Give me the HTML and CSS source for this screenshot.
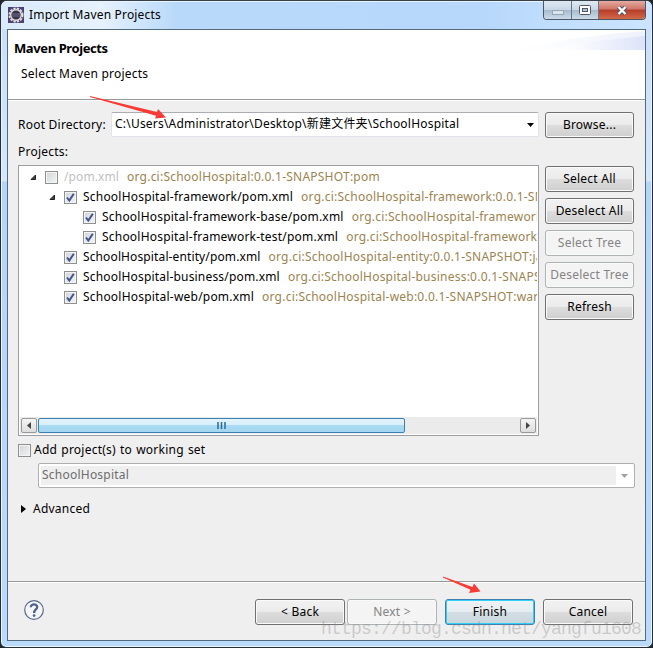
FILE: index.html
```html
<!DOCTYPE html>
<html lang="en">
<head>
<meta charset="utf-8">
<title>Import Maven Projects</title>
<link rel="stylesheet" href="styles.css">
</head>
<body>
<svg class="defs" width="0" height="0">
  <symbol id="tick" viewBox="0 0 13 13"><path d="M3 6.5 5.3 9.5 9.8 2.8" fill="none" stroke="#41558f" stroke-width="2"/></symbol>
  <symbol id="open" viewBox="0 0 7 7"><path d="M5.5 1v4.500H1z" fill="#444" stroke="#222"/></symbol>
</svg>
<div class="window">
  <header class="titlebar">
    <svg class="app-icon" width="16" height="16" viewBox="0 0 16 16">
      <rect width="16" height="16" fill="#4c4275"/>
      <circle cx="8" cy="8" r="6.5" fill="none" stroke="#e3e0dc" stroke-width="2" stroke-dasharray="2.3 1.1"/>
      <circle cx="8" cy="8" r="5.3" fill="#35304b" stroke="#ddd9d7" stroke-width="1.4"/>
      <path d="M4 7h8M4 9h8" stroke="#77718e"/>
    </svg>
    <h1 class="title">Import Maven Projects</h1>
    <div class="controls">
      <span class="ctl min"><svg width="12" height="6" viewBox="0 0 12 6"><rect x=".5" y=".5" width="11" height="4" fill="#dae4ed" stroke="#98a6b6"/></svg></span>
      <span class="ctl max"><svg width="12" height="10" viewBox="0 0 12 10"><rect x=".5" y=".5" width="11" height="9" rx="1" fill="#fff" stroke="#535666"/><rect x="3.5" y="3.5" width="5" height="3" fill="#a9c4de" stroke="#535666"/></svg></span>
      <span class="ctl close"><svg width="12" height="11" viewBox="0 0 12 11"><path d="M2.5 2 9.5 9M9.5 2 2.5 9" stroke="#53556a" stroke-width="4.4"/><path d="M2.5 2 9.5 9M9.5 2 2.5 9" stroke="#fff" stroke-width="2.4"/></svg></span>
    </div>
  </header>
  <main class="client">
    <section class="banner">
      <h2 class="heading">Maven Projects</h2>
      <p class="sub">Select Maven projects</p>
      <svg class="swoosh" width="140" height="21" viewBox="0 0 140 21">
        <defs><linearGradient id="sw"><stop offset="0" stop-color="#fff"/><stop offset=".3" stop-color="#fbfcff"/><stop offset="1" stop-color="#dde3f8"/></linearGradient></defs>
        <path d="M0 20Q80 5 140 1V20Z" fill="url(#sw)" opacity=".5"/><path d="M40 20Q90 10 140 6V20Z" fill="url(#sw)"/>
      </svg>
    </section>
    <section class="body">
      <div class="root-row">
        <label class="label root-label">Root Directory:</label>
        <div class="combo"><span class="path">C:\Users\Administrator\Desktop\新建文件夹\SchoolHospital</span><svg width="7" height="4"><path d="M0 0h7L3.500 4z"/></svg></div>
        <button class="btn">Browse...</button>
      </div>
      <div class="label projects">Projects:</div>
      <div class="split">
        <div class="tree">
          <div class="rows">
            <div class="row l0"><svg class="arrow"><use href="#open"/></svg><i class="box"></i><span class="name off">/pom.xml</span><span class="art">org.ci:SchoolHospital:0.0.1-SNAPSHOT:pom</span></div>
            <div class="row l1"><svg class="arrow"><use href="#open"/></svg><i class="box"><svg><use href="#tick"/></svg></i><span class="name">SchoolHospital-framework/pom.xml</span><span class="art">org.ci:SchoolHospital-framework:0.0.1-SNAPSHOT:pom</span></div>
            <div class="row l2"><i class="box"><svg><use href="#tick"/></svg></i><span class="name">SchoolHospital-framework-base/pom.xml</span><span class="art">org.ci:SchoolHospital-framework-base:0.0.1-SNAPSHOT:jar</span></div>
            <div class="row l2"><i class="box"><svg><use href="#tick"/></svg></i><span class="name">SchoolHospital-framework-test/pom.xml</span><span class="art">org.ci:SchoolHospital-framework-test:0.0.1-SNAPSHOT:jar</span></div>
            <div class="row l1"><span class="arrow"></span><i class="box"><svg><use href="#tick"/></svg></i><span class="name entity">SchoolHospital-entity/pom.xml</span><span class="art">org.ci:SchoolHospital-entity:0.0.1-SNAPSHOT:jar</span></div>
            <div class="row l1"><span class="arrow"></span><i class="box"><svg><use href="#tick"/></svg></i><span class="name business">SchoolHospital-business/pom.xml</span><span class="art">org.ci:SchoolHospital-business:0.0.1-SNAPSHOT:jar</span></div>
            <div class="row l1"><span class="arrow"></span><i class="box"><svg><use href="#tick"/></svg></i><span class="name">SchoolHospital-web/pom.xml</span><span class="art">org.ci:SchoolHospital-web:0.0.1-SNAPSHOT:war</span></div>
          </div>
          <div class="scroll">
            <span class="sbtn"><svg width="4" height="7"><path d="M4 0v7L0 3.500z" fill="#444"/></svg></span>
            <span class="thumb"><svg width="9" height="7"><path d="M1 0v7M4.500 0v7M8 0v7" stroke="#2b6a94" stroke-width="1.500"/></svg></span>
            <span class="sbtn end"><svg width="4" height="7"><path d="M0 0v7L4 3.500z" fill="#444"/></svg></span>
          </div>
        </div>
        <div class="side">
          <button class="btn">Select All</button>
          <button class="btn">Deselect All</button>
          <button class="btn disabled">Select Tree</button>
          <button class="btn disabled">Deselect Tree</button>
          <button class="btn">Refresh</button>
        </div>
      </div>
      <label class="check"><i class="box"></i><span class="label addset">Add project(s) to working set</span></label>
      <div class="set"><span class="set-text">SchoolHospital</span><span class="set-arrow"><svg width="7" height="4"><path d="M0 0h7L3.500 4z" fill="#a0a0a0"/></svg></span></div>
      <div class="advanced"><svg width="5" height="8"><path d="M0 0 5 4 0 8z"/></svg><span class="label">Advanced</span></div>
    </section>
    <footer class="footer">
      <svg class="help" width="20" height="20" viewBox="0 0 20 20"><circle cx="10" cy="10" r="9.300" fill="#f6f6f7" stroke="#586990" stroke-width="1.200"/><path d="M6.800 7.200C6.800 3.300 13.300 3.500 13.200 7.200 13.100 9.500 10.100 9.500 10.100 13" fill="none" stroke="#4f6290" stroke-width="2.300"/><circle cx="10.100" cy="15.600" r="1.400" fill="#4f6290"/></svg>
      <button class="btn">&lt; Back</button>
      <button class="btn disabled next">Next &gt;</button>
      <button class="btn primary">Finish</button>
      <button class="btn cancel">Cancel</button>
    </footer>
  </main>
  <svg class="marks" width="653" height="648" fill="#f93a35"><path d="M90 96 157 112 158 109 166 117.500 155 118.500 156 115.800 90 97Z"/><path d="M443 576.500 472.500 587 474 583.500 480.500 591.500 469 593 470.500 589.800 443 577.500Z"/></svg>
  <div class="watermark">https://blog.csdn.net/yangfu1608</div>
</div>
</body>
</html>
```
FILE: styles.css
```css
* { box-sizing: border-box; }
body { margin: 0; background: #20242c; font: 12px/16px "Noto Sans", "Noto Sans CJK SC", sans-serif; color: #000; letter-spacing: .23px; }
.defs { position: absolute; }
.window { position: relative; width: 653px; height: 648px; border: 1px solid #252e3b; border-top-color: #38404c; border-radius: 7px 7px 6px 6px; padding: 0 6px 6px; overflow: hidden; background: linear-gradient(#c5dffa, #d5e7fb 180px, #b3d5fa 181px, #badafb); box-shadow: inset 0 0 0 1px #e9f4ff; }
.titlebar { display: flex; height: 28px; align-items: flex-start; margin: 0 -6px; padding-left: 7px; background: linear-gradient(90deg, #d9eafa, #e6f2fd 100px, #b9d9fa 175px, #b7d8fb 480px, #cce4ff); box-shadow: inset 0 1px #e9f4ff; }
.app-icon { margin-top: 6px; }
.title { margin: 6px 0 0 5px; font-size: 12px; font-weight: 400; line-height: 16px; letter-spacing: .17px; }
.controls { display: flex; width: 103px; height: 19px; margin: 0 6px 0 auto; border: 1px solid #4c5766; border-top: 0; border-radius: 0 0 4px 4px; overflow: hidden; }
.ctl { display: flex; align-items: center; justify-content: center; width: 28px; background: linear-gradient(#dfe9f4, #c9d7e6 48%, #a7bacd 50%, #cbdbea); border-right: 1px solid #66778a; }
.max { width: 27px; }
.min svg { margin-top: 6px; }
.close { width: 46px; border: 0; background: linear-gradient(#e6aaa0, #cf7568 45%, #b63c28 50%, #d46949); }
.client { display: flex; flex-direction: column; height: 612px; width: 639px; border: 1px solid #53697e; background: #efefef; }
.banner { position: relative; height: 70px; border-bottom: 1px solid #969a96; background: #fff; padding: 10px 6px; }
.heading { margin: 0; font-size: 13px; line-height: 17px; font-weight: 700; letter-spacing: -.4px; }
.sub { margin: 9px 0 0 7px; }
.swoosh { position: absolute; top: 0; right: 0; }
.body { height: 481px; border-top: 1px solid #fff; padding: 11px 9px 0 10px; }
.root-row { display: flex; align-items: center; height: 25px; }
.root-label { width: 93px; }
.combo { display: flex; align-items: center; justify-content: space-between; width: 428px; height: 25px; margin-right: 6px; padding: 0 4px 0 3px; border: 1px solid #e2e3ea; border-top-color: #abadb3; border-radius: 2px; background: #fff; white-space: nowrap; }
.path { margin-top: -2px; letter-spacing: .21px; }
.btn { flex: none; width: 90px; height: 26px; padding: 0; border: 1px solid #707070; border-radius: 3px; background: linear-gradient(#f2f2f2, #ebebeb 49%, #dddddd 50%, #cfcfcf); box-shadow: inset 0 0 0 1px #fafafa; color: #000; font: inherit; letter-spacing: inherit; white-space: nowrap; }
.root-row .btn, .side .btn { width: 89px; }
.disabled { border-color: #adb2b5; background: #f4f4f4; color: #838383; }
.projects { margin: 7px 0 5px; }
.split { display: flex; gap: 6px; }
.tree { display: flex; flex-direction: column; justify-content: space-between; width: 521px; height: 271px; border: 1px solid #9a9da3; background: #fff; padding: 1px; }
.rows { overflow: hidden; }
.row { display: flex; align-items: center; height: 20px; white-space: nowrap; }
.l0 { padding-left: 10px; }
.l1 { padding-left: 29px; }
.l2 { padding-left: 63px; }
.arrow { width: 7px; height: 7px; margin-right: 8px; flex: none; }
.box { display: block; flex: none; width: 13px; height: 13px; border: 1px solid #8e8f8f; background: linear-gradient(135deg, #d2d5d9, #f3f3f3); box-shadow: inset 0 0 0 1px #f4f4f4; }
.box svg { display: block; width: 13px; height: 13px; margin: -1px; }
.name { margin-left: 6px; letter-spacing: .21px; }
.entity { letter-spacing: .12px; }
.business { letter-spacing: .18px; }
.off { color: #bfbfbf; letter-spacing: .1px; }
.art { margin-left: 8px; color: #9b8350; }
.scroll { display: flex; height: 17px; background: #ebebeb; padding: 1px; }
.sbtn { display: flex; align-items: center; justify-content: center; width: 16px; height: 15px; border: 1px solid #999; border-radius: 2px; background: linear-gradient(#f5f5f5, #ddd); }
.sbtn.end { margin-left: auto; }
.thumb { display: flex; align-items: center; justify-content: center; width: 367px; height: 15px; margin-left: 1px; border: 1px solid #3c7fb1; border-radius: 2px; background: linear-gradient(#e3f4fc, #d6eefb 49%, #a9dbf5 50%, #a4d6f0); }
.side { display: flex; flex-direction: column; gap: 6px; padding-top: 1px; }
.check { display: flex; align-items: center; gap: 3px; margin-top: 6px; height: 16px; }
.addset { word-spacing: .8px; }
.set { display: flex; width: 597px; height: 25px; margin: 5px 0 0 20px; border: 1px solid #afafaf; border-radius: 2px; background: #fff; padding: 2px; }
.set-text { width: 575px; background: #efefef; padding-left: 1px; color: #6d6d6d; line-height: 18px; }
.set-arrow { display: flex; flex: 1; align-items: center; justify-content: center; }
.advanced { display: flex; align-items: center; margin: 13px 0 0 3px; gap: 7px; }
.footer { display: flex; height: 59px; border-top: 1px solid #969a96; box-shadow: inset 0 1px #fff; padding: 17px 11px 0 16px; }
.help { margin: 1px 211px 0 0; }
.next { margin: 0 8px 0 2px; }
.cancel { margin-left: 8px; }
.primary { border-color: #3c7fb1; background: linear-gradient(#eef3f5, #e6edf0 49%, #d3dee4 50%, #c9d5dc); box-shadow: inset 0 0 0 1px #31d0f8; }
.marks { position: absolute; left: -1px; top: -1px; }
.watermark { position: absolute; left: 320px; top: 617px; font: 18px/22px "Liberation Mono", monospace; letter-spacing: -.8px; color: rgba(130, 130, 130, .35); white-space: nowrap; }
```
